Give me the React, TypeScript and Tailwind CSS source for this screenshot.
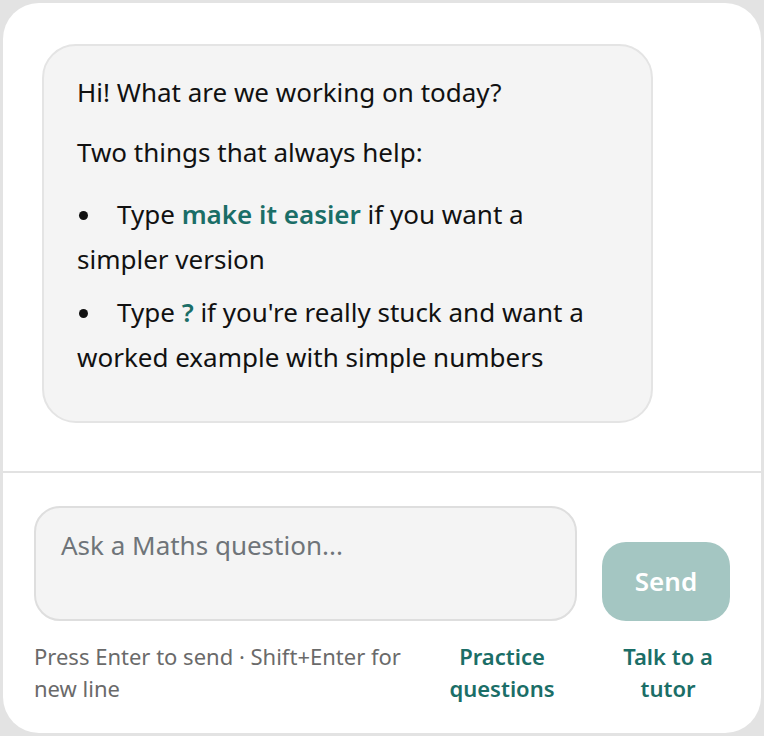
import React from "react";

const font = { fontFamily: '"Noto Sans", "Open Sans", Arial, sans-serif' };

function Bullet({ children }: { children: React.ReactNode }) {
  return (
    <li className="leading-[45px]">
      <span className="mb-[4px] ml-[2px] mr-[29px] inline-block h-[9px] w-[9px] rounded-full bg-[#111] align-middle" />
      {children}
    </li>
  );
}

export default function App() {
  return (
    <div className="h-[736px] w-[764px] bg-[#e3e3e3] p-[3px]" style={font}>
      <div className="flex h-full flex-col overflow-hidden rounded-[36px] bg-white">
        {/* messages */}
        <div className="h-[468px] pl-[39px] pt-[41px]">
          <div className="h-[379px] w-[611px] rounded-[34px] border-2 border-[#e4e4e4] bg-[#f4f4f4] px-[33px] pt-[24px] text-[26px] text-[#111]">
            <p className="leading-[45px]">Hi! What are we working on today?</p>
            <p className="mt-[15px] leading-[45px]">Two things that always help:</p>
            <ul className="mt-[17px] flex flex-col gap-[8px]">
              <Bullet>
                Type <span className="font-semibold text-[#1b6e67]">make it easier</span> if you want a simpler version
              </Bullet>
              <Bullet>
                Type <span className="font-semibold text-[#1b6e67]">?</span> if you're really stuck and want a worked example with simple numbers
              </Bullet>
            </ul>
          </div>
        </div>

        <div className="h-[2px] bg-[#e2e2e2]" />

        {/* composer */}
        <div className="flex flex-1 flex-col px-[31px] pt-[33px]">
          <div className="flex items-end gap-[25px]">
            <textarea
              placeholder="Ask a Maths question..."
              className="h-[115px] flex-1 resize-none rounded-[26px] border-2 border-[#dedede] bg-[#f4f4f4] px-[25px] pt-[17px] text-[26px] leading-[40px] text-[#111] outline-none placeholder:text-[#6f7479]"
              style={font}
            />
            <button className="h-[79px] w-[128px] rounded-[24px] bg-[#a4c6c2] text-[26px] font-semibold text-white">
              Send
            </button>
          </div>
          <div className="mt-[19px] flex items-start">
            <p className="flex-1 pr-[12px] text-[22px] leading-[32px] text-[#6a6a6a]">
              Press Enter to send · Shift+Enter for new line
            </p>
            <button className="w-[140px] text-center text-[22px] font-semibold leading-[32px] text-[#1b6e67]">
              Practice questions
            </button>
            <button className="ml-[34px] w-[124px] text-center text-[22px] font-semibold leading-[32px] text-[#1b6e67]">
              Talk to a tutor
            </button>
          </div>
        </div>
      </div>
    </div>
  );
}
